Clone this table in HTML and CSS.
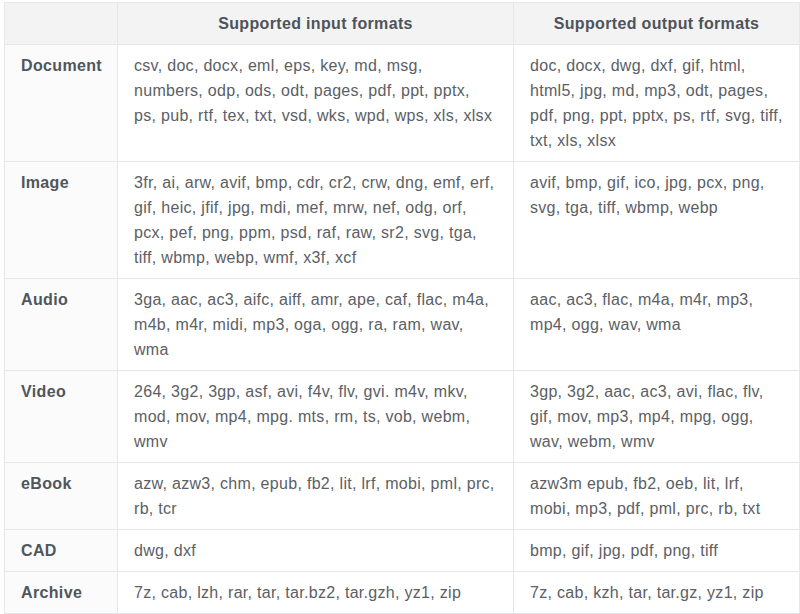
FILE: index.html
```html
<!DOCTYPE html>
<html>
<head>
<meta charset="utf-8">
<link rel="stylesheet" href="styles.css">
</head>
<body>
<table class="formats">
  <colgroup>
    <col class="c-type">
    <col class="c-in">
    <col class="c-out">
  </colgroup>
  <thead>
    <tr>
      <th class="corner"></th>
      <th>Supported input formats</th>
      <th>Supported output formats</th>
    </tr>
  </thead>
  <tbody>
    <tr>
      <th class="label">Document</th>
      <td>csv, doc, docx, eml, eps, key, md, msg,<br>numbers, odp, ods, odt, pages, pdf, ppt, pptx,<br>ps, pub, rtf, tex, txt, vsd, wks, wpd, wps, xls, xlsx</td>
      <td>doc, docx, dwg, dxf, gif, html,<br>html5, jpg, md, mp3, odt, pages,<br>pdf, png, ppt, pptx, ps, rtf, svg, tiff,<br>txt, xls, xlsx</td>
    </tr>
    <tr>
      <th class="label">Image</th>
      <td>3fr, ai, arw, avif, bmp, cdr, cr2, crw, dng, emf, erf,<br>gif, heic, jfif, jpg, mdi, mef, mrw, nef, odg, orf,<br>pcx, pef, png, ppm, psd, raf, raw, sr2, svg, tga,<br>tiff, wbmp, webp, wmf, x3f, xcf</td>
      <td>avif, bmp, gif, ico, jpg, pcx, png,<br>svg, tga, tiff, wbmp, webp</td>
    </tr>
    <tr>
      <th class="label">Audio</th>
      <td>3ga, aac, ac3, aifc, aiff, amr, ape, caf, flac, m4a,<br>m4b, m4r, midi, mp3, oga, ogg, ra, ram, wav,<br>wma</td>
      <td>aac, ac3, flac, m4a, m4r, mp3,<br>mp4, ogg, wav, wma</td>
    </tr>
    <tr>
      <th class="label">Video</th>
      <td>264, 3g2, 3gp, asf, avi, f4v, flv, gvi. m4v, mkv,<br>mod, mov, mp4, mpg. mts, rm, ts, vob, webm,<br>wmv</td>
      <td>3gp, 3g2, aac, ac3, avi, flac, flv,<br>gif, mov, mp3, mp4, mpg, ogg,<br>wav, webm, wmv</td>
    </tr>
    <tr>
      <th class="label">eBook</th>
      <td>azw, azw3, chm, epub, fb2, lit, lrf, mobi, pml, prc,<br>rb, tcr</td>
      <td>azw3m epub, fb2, oeb, lit, lrf,<br>mobi, mp3, pdf, pml, prc, rb, txt</td>
    </tr>
    <tr>
      <th class="label">CAD</th>
      <td>dwg, dxf</td>
      <td>bmp, gif, jpg, pdf, png, tiff</td>
    </tr>
    <tr>
      <th class="label">Archive</th>
      <td>7z, cab, lzh, rar, tar, tar.bz2, tar.gzh, yz1, zip</td>
      <td>7z, cab, kzh, tar, tar.gz, yz1, zip</td>
    </tr>
  </tbody>
</table>
</body>
</html>
```

FILE: styles.css
```css
html, body {
  margin: 0;
  padding: 0;
  background: #ffffff;
}

body {
  padding: 2px 1px 0 4px;
  font-family: "Liberation Sans", Arial, sans-serif;
  font-size: 16px;
  line-height: 25px;
  color: #5b6065;
}

.formats {
  border-collapse: collapse;
  table-layout: fixed;
  width: 795px;
}

.c-type { width: 113px; }
.c-in { width: 396px; }
.c-out { width: 286px; }

.formats th,
.formats td {
  border: 1px solid #e6e7e9;
  padding: 8px 16px;
  vertical-align: top;
  text-align: left;
}

.formats thead th {
  background: #f3f3f4;
  color: #4e5459;
  font-weight: bold;
  text-align: center;
  letter-spacing: 0.35px;
}

.formats .label {
  background: #fbfbfc;
  color: #50565b;
  font-weight: bold;
  letter-spacing: 0.35px;
}

.formats td {
  background: #ffffff;
  letter-spacing: 0.3px;
  white-space: nowrap;
}
```
